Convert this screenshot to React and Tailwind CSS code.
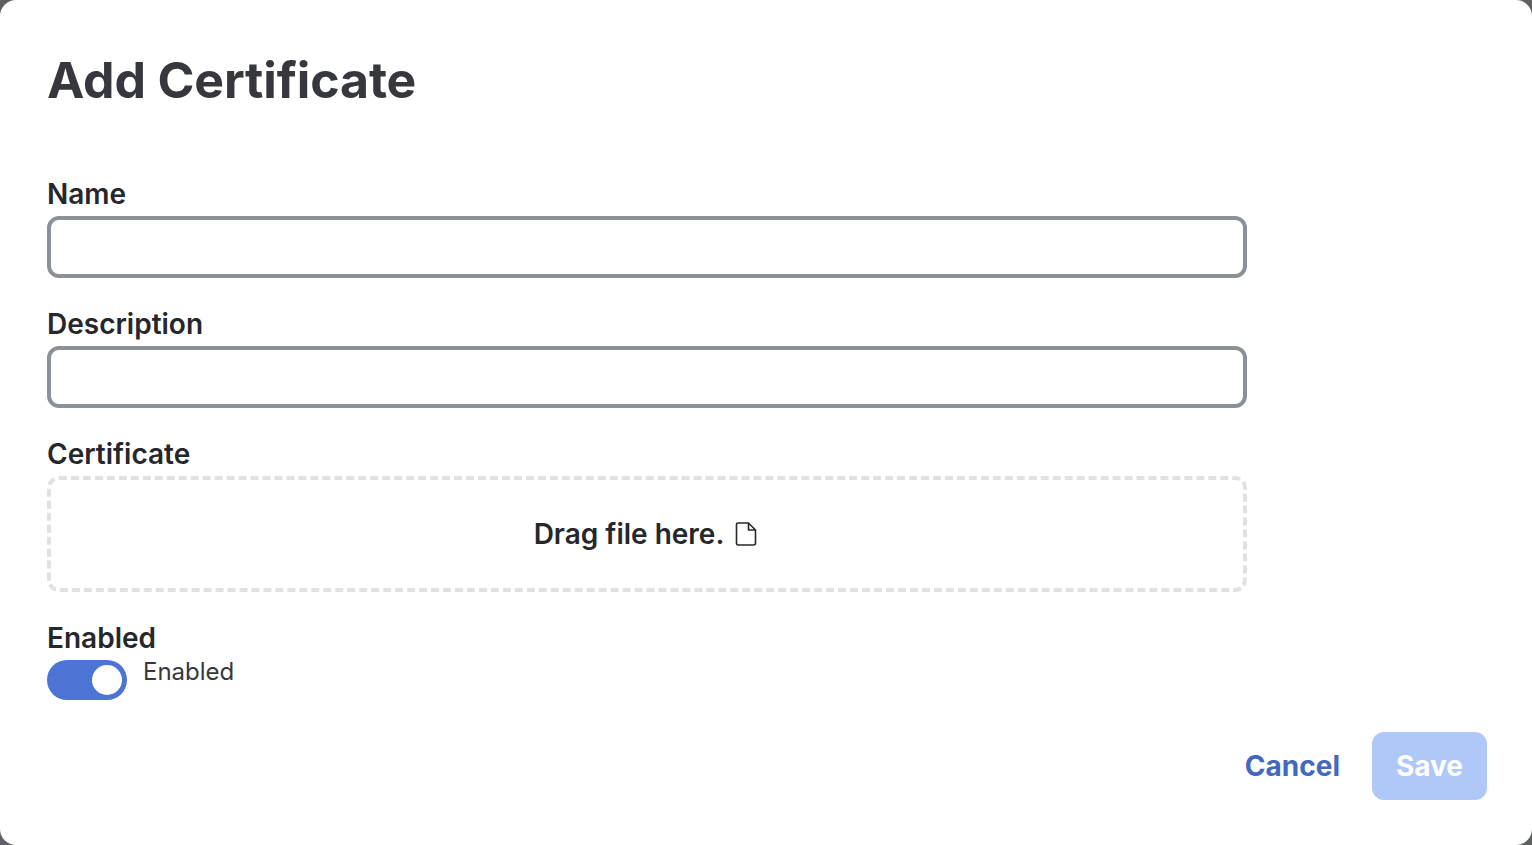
import React from "react";

function Field({ label }) {
  return (
    <div className="flex flex-col h-[130px]">
      <label className="h-[38px] text-[28px] leading-[32px] font-semibold text-[#25272c]">{label}</label>
      <input className="w-[1200px] h-[62px] rounded-[12px] border-[4px] border-[#8c9097] bg-white" />
    </div>
  );
}

export default function App() {
  return (
    <div className="w-[1532px] h-[845px] bg-[#5f6063] overflow-hidden font-['Inter',sans-serif]">
      <div className="w-full h-full bg-white rounded-[16px] pl-[47px] pr-[45px] flex flex-col">
        <h1 className="h-[178px] pt-[49px] text-[50px] leading-[62px] tracking-[-0.15px] font-bold text-[#36383d]">Add Certificate</h1>
        <Field label="Name" />
        <Field label="Description" />
        <div className="flex flex-col">
          <label className="h-[38px] text-[28px] leading-[32px] font-semibold text-[#25272c]">Certificate</label>
          <div className="w-[1200px] h-[116px] rounded-[12px] border-[4px] border-dashed border-[#e1e1e3] pr-[2px] flex items-center justify-center gap-[10px]">
            <span className="text-[28px] leading-[32px] font-semibold text-[#25272c]">Drag file here.</span>
            <svg width="24" height="24" viewBox="0 0 24 24" fill="none" stroke="#25272c" strokeWidth="1.6" strokeLinejoin="round">
              <path d="M4 1h10.5L21.5 8v13a2 2 0 0 1-2 2h-15a2 2 0 0 1-2-2V2.5A1.5 1.5 0 0 1 4 1z" />
              <path d="M14.5 1v7h7" />
            </svg>
          </div>
        </div>
        <div className="mt-[30px] h-[38px] text-[28px] leading-[32px] font-semibold text-[#25272c]">Enabled</div>
        <div className="flex items-start gap-[16px]">
          <div className="w-[80px] h-[40px] rounded-full bg-[#4c74d4] flex items-center justify-end pr-[5px]">
            <div className="w-[30px] h-[30px] rounded-full bg-white" />
          </div>
          <span className="text-[24px] leading-[24px] text-[#36383d]">Enabled</span>
        </div>
        <div className="mt-[32px] flex justify-end items-center gap-[32px]">
          <button className="text-[28px] font-bold text-[#4468bf]">Cancel</button>
          <button className="w-[115px] h-[68px] rounded-[12px] bg-[#afc8f7] text-[28px] font-bold text-white">Save</button>
        </div>
      </div>
    </div>
  );
}
